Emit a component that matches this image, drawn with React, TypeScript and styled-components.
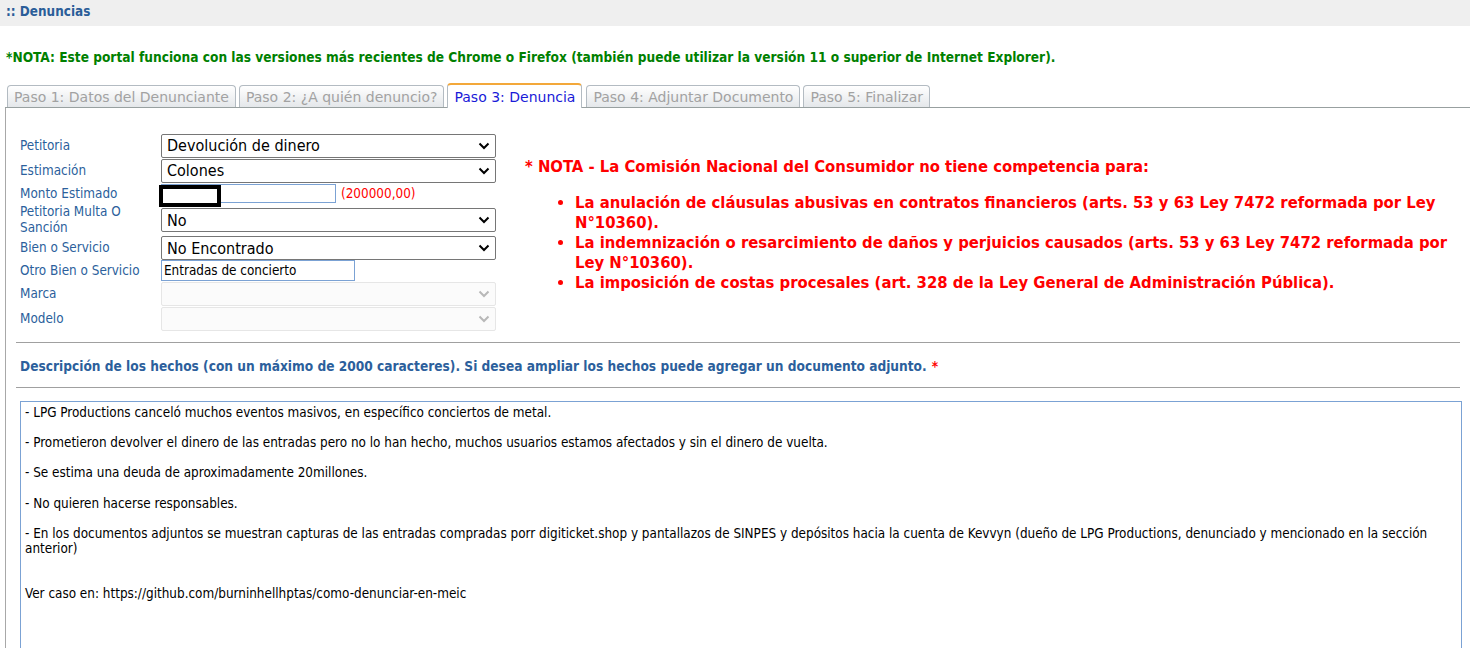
import React from "react";
import styled, { createGlobalStyle } from "styled-components";

const Global = createGlobalStyle`
  html, body { margin: 0; padding: 0; background: #fff; }
  body { font-family: "DejaVu Sans Condensed", "DejaVu Sans", sans-serif; overflow: hidden; }
  * { box-sizing: border-box; }
`;

const Page = styled.div`
  width: 1470px;
  height: 648px;
  overflow: hidden;
`;

const Header = styled.div`
  height: 26px;
  background: #efefef;
  padding: 4px 0 0 6px;
  line-height: 16px;
  font-weight: bold;
  font-size: 13.4px;
  color: #2a5d98;
`;

const BrowserNote = styled.div`
  padding: 23px 0 0 6px;
  height: 56px;
  font-weight: bold;
  font-size: 13.6px;
  color: #008000;
`;

const TabBar = styled.div`
  display: flex;
  align-items: flex-end;
  gap: 3px;
  height: 26px;
  margin-left: 5px;
  padding-left: 2px;
  border-bottom: 1px solid #98a0a0;
`;

const Tab = styled.div<{ $active?: boolean }>`
  font-family: "DejaVu Sans", sans-serif;
  font-size: 14px;
  padding: 0 6px 0 6px;
  border: 1px solid #b3bbc2;
  border-bottom: none;
  border-radius: 4px 4px 0 0;
  display: flex;
  align-items: center;
  height: ${(p) => (p.$active ? "25px" : "22px")};
  margin: ${(p) => (p.$active ? "0 1px -1px 0" : "0")};
  color: ${(p) => (p.$active ? "#1a1ad8" : "#a2a2a2")};
  background: ${(p) =>
    p.$active ? "#ffffff" : "linear-gradient(#ffffff, #e4e7ea)"};
  border-top: ${(p) => (p.$active ? "2px solid #f3a83a" : "1px solid #b3bbc2")};
`;

const Panel = styled.div`
  margin-left: 5px;
  border-left: 1px solid #a8a8a8;
  padding: 25px 9px 0 14px;
`;

const Top = styled.div`
  display: flex;
  gap: 29px;
`;

const Form = styled.div`
  display: flex;
  flex-direction: column;
  width: 476px;
  flex-shrink: 0;
`;

const Row = styled.div<{ $h: number }>`
  display: flex;
  align-items: center;
  height: ${(p) => p.$h}px;
`;

const Label = styled.div`
  width: 141px;
  flex-shrink: 0;
  font-size: 13.4px;
  line-height: 16px;
  color: #2c5f9c;
`;

const SelectWrap = styled.div`
  position: relative;
  width: 335px;
  height: 24px;
`;

const Select = styled.select<{ disabled?: boolean }>`
  appearance: none;
  width: 100%;
  height: 100%;
  margin: 0;
  padding: 0 24px 0 5px;
  font-family: "DejaVu Sans Condensed", "DejaVu Sans", sans-serif;
  font-size: 16px;
  color: #000;
  border: 1px solid ${(p) => (p.disabled ? "#dcdcdc" : "#767676")};
  border-radius: 2px;
  background: ${(p) => (p.disabled ? "#fafafa" : "#fff")};
  outline: none;
`;

const Chevron = styled.svg<{ $disabled?: boolean }>`
  position: absolute;
  right: 6px;
  top: 7px;
  width: 12px;
  height: 10px;
  pointer-events: none;
  stroke: ${(p) => (p.$disabled ? "#b8b8b8" : "#000")};
`;

const TextInput = styled.input<{ $w: number; $h: number }>`
  width: ${(p) => p.$w}px;
  height: ${(p) => p.$h}px;
  margin: 0;
  padding: 0 2px;
  font-family: "DejaVu Sans Condensed", "DejaVu Sans", sans-serif;
  font-size: 13.4px;
  color: #000;
  border: 1px solid #7ba2d4;
  outline: none;
`;

const InputWrap = styled.div`
  position: relative;
  display: flex;
  align-items: center;
`;

const Redaction = styled.div`
  position: absolute;
  left: -2px;
  top: 1px;
  width: 62px;
  height: 22px;
  border: 4px solid #000;
  background: #fff;
`;

const Hint = styled.span`
  margin-left: 5px;
  font-size: 13.4px;
  color: #ff0000;
`;

const Restrictions = styled.div`
  padding-top: 24px;
  color: #ff0000;
  font-weight: bold;
  font-size: 16.5px;
`;

const RestrictionsTitle = styled.div`
  line-height: 20px;
`;

const RestrictionList = styled.ul`
  margin: 16px 0 0 0;
  padding-left: 50px;
  line-height: 20px;
`;

const Rule = styled.hr`
  border: none;
  border-top: 1px solid #a0a0a0;
  margin: 0 0 0 -4px;
  width: 1444px;
`;

const DescTitle = styled.div`
  height: 44px;
  padding-top: 2px;
  display: flex;
  align-items: center;
  font-weight: bold;
  font-size: 13.6px;
  color: #2c5f9c;
`;

const Req = styled.span`
  color: #ff0000;
  margin-left: 5px;
`;

const Spacer = styled.div`
  height: 11px;
`;

const Description = styled.textarea`
  display: block;
  margin: 13px 0 0 0;
  width: 1442px;
  height: 300px;
  padding: 3px 4px;
  resize: none;
  font-family: "DejaVu Sans Condensed", "DejaVu Sans", sans-serif;
  font-size: 13.4px;
  line-height: 15.1px;
  color: #000;
  border: 1px solid #7ba2d4;
  outline: none;
`;

const ChevronIcon = ({ disabled }: { disabled?: boolean }) => (
  <Chevron $disabled={disabled} viewBox="0 0 12 10" fill="none" strokeWidth={2}>
    <polyline points="1.5,2.5 6,7 10.5,2.5" />
  </Chevron>
);

const Dropdown = ({ value, disabled }: { value?: string; disabled?: boolean }) => (
  <SelectWrap>
    <Select disabled={disabled} defaultValue={value ?? ""}>
      <option value={value ?? ""}>{value ?? ""}</option>
    </Select>
    <ChevronIcon disabled={disabled} />
  </SelectWrap>
);

const descriptionText = `- LPG Productions canceló muchos eventos masivos, en específico conciertos de metal.

- Prometieron devolver el dinero de las entradas pero no lo han hecho, muchos usuarios estamos afectados y sin el dinero de vuelta.

- Se estima una deuda de aproximadamente 20millones.

- No quieren hacerse responsables.

- En los documentos adjuntos se muestran capturas de las entradas compradas porr digiticket.shop y pantallazos de SINPES y depósitos hacia la cuenta de Kevvyn (dueño de LPG Productions, denunciado y mencionado en la sección anterior)


Ver caso en: https://github.com/burninhellhptas/como-denunciar-en-meic`;

const tabs = [
  "Paso 1: Datos del Denunciante",
  "Paso 2: ¿A quién denuncio?",
  "Paso 3: Denuncia",
  "Paso 4: Adjuntar Documento",
  "Paso 5: Finalizar",
];

export default function App() {
  return (
    <Page>
      <Global />
      <Header>:: Denuncias</Header>
      <BrowserNote>
        *NOTA: Este portal funciona con las versiones más recientes de Chrome o Firefox (también puede utilizar la versión 11 o superior de Internet Explorer).
      </BrowserNote>
      <TabBar>
        {tabs.map((t, i) => (
          <Tab key={t} $active={i === 2}>
            {t}
          </Tab>
        ))}
      </TabBar>
      <Panel>
        <Top>
          <Form>
            <Row $h={25}>
              <Label>Petitoria</Label>
              <Dropdown value="Devolución de dinero" />
            </Row>
            <Row $h={25}>
              <Label>Estimación</Label>
              <Dropdown value="Colones" />
            </Row>
            <Row $h={21}>
              <Label>Monto Estimado</Label>
              <InputWrap>
                <TextInput $w={175} $h={19} defaultValue="" />
                <Redaction />
                <Hint>(200000,00)</Hint>
              </InputWrap>
            </Row>
            <Row $h={32}>
              <Label>
                Petitoria Multa O
                <br />
                Sanción
              </Label>
              <Dropdown value="No" />
            </Row>
            <Row $h={24}>
              <Label>Bien o Servicio</Label>
              <Dropdown value="No Encontrado" />
            </Row>
            <Row $h={21}>
              <Label>Otro Bien o Servicio</Label>
              <TextInput $w={194} $h={21} defaultValue="Entradas de concierto" />
            </Row>
            <Row $h={25}>
              <Label>Marca</Label>
              <Dropdown disabled />
            </Row>
            <Row $h={25}>
              <Label>Modelo</Label>
              <Dropdown disabled />
            </Row>
          </Form>
          <Restrictions>
            <RestrictionsTitle>
              * NOTA - La Comisión Nacional del Consumidor no tiene competencia para:
            </RestrictionsTitle>
            <RestrictionList>
              <li>
                La anulación de cláusulas abusivas en contratos financieros (arts. 53 y 63 Ley 7472 reformada por Ley N°10360).
              </li>
              <li>
                La indemnización o resarcimiento de daños y perjuicios causados (arts. 53 y 63 Ley 7472 reformada por Ley N°10360).
              </li>
              <li>
                La imposición de costas procesales (art. 328 de la Ley General de Administración Pública).
              </li>
            </RestrictionList>
          </Restrictions>
        </Top>
        <Spacer />
        <Rule />
        <DescTitle>
          Descripción de los hechos (con un máximo de 2000 caracteres). Si desea ampliar los hechos puede agregar un documento adjunto.
          <Req>*</Req>
        </DescTitle>
        <Rule />
        <Description readOnly defaultValue={descriptionText} />
      </Panel>
    </Page>
  );
}
